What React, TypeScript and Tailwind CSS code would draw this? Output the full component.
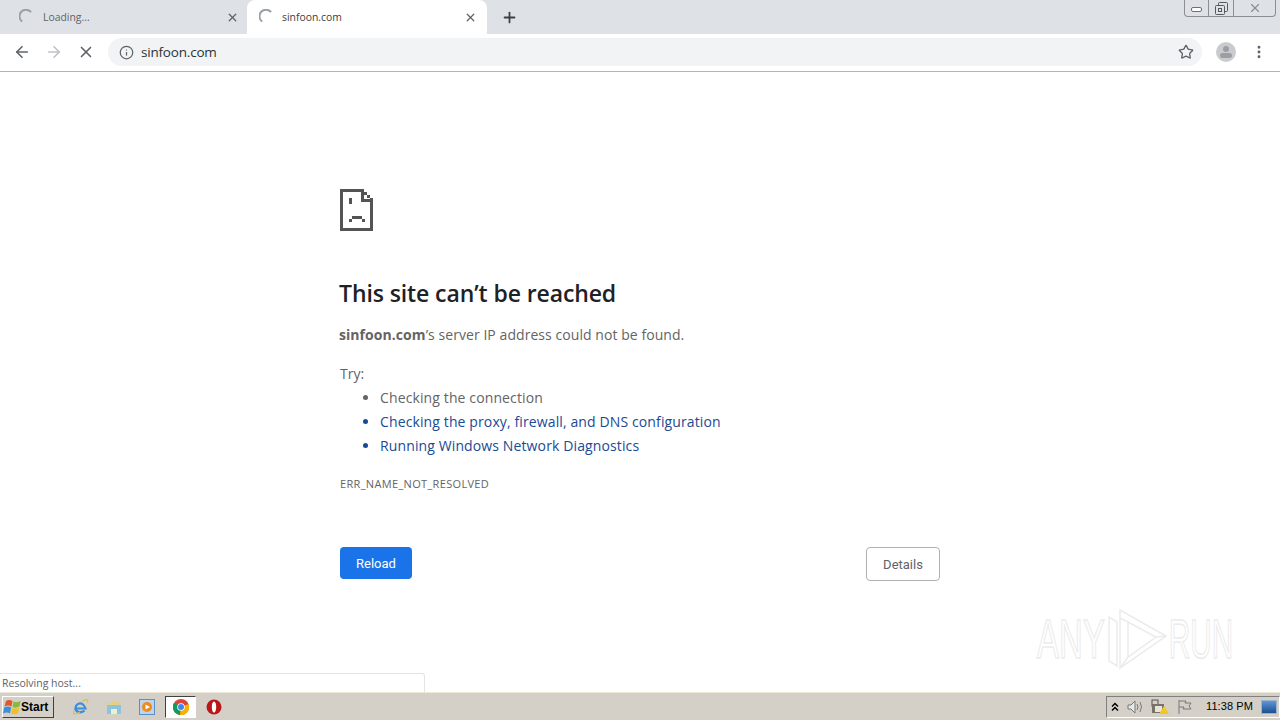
import React from 'react';
import { ArrowLeft, ArrowRight, Info, MoreVertical, Plus, Star, X } from 'lucide-react';

function Spinner() {
  return (
    <svg width="16" height="16" viewBox="0 0 16 16" fill="none" className="shrink-0">
      <path d="M2.5 12 A6.5 6.5 0 0 1 11.5 2.5" stroke="#9aa0a6" strokeWidth="2" strokeLinecap="round" />
    </svg>
  );
}

function SadPage() {
  return (
    <svg width="33" height="42" viewBox="0 0 33 42" fill="#545454" shapeRendering="crispEdges">
      <path d="M0 0H24V3H3V39H30V12H33V42H0Z" />
      <path d="M21 0H24V10H33V13H21Z" />
      <path d="M24 3H27V6H30V9H33V12H30V9H27V6H24Z" />
      <rect x="9" y="9" width="3" height="6" />
      <rect x="9" y="30" width="3" height="3" />
      <rect x="12" y="27" width="10" height="3" />
      <rect x="22" y="30" width="3" height="3" />
    </svg>
  );
}

function ChromeLogo() {
  return (
    <svg width="16" height="16" viewBox="0 0 16 16">
      <circle cx="8" cy="8" r="8" fill="#db4437" />
      <path d="M8 8 L1 4 A8 8 0 0 0 7 16 Z" fill="#0f9d58" />
      <path d="M8 8 L15.5 5 A8 8 0 0 1 7 16 Z" fill="#f4b400" />
      <circle cx="8" cy="8" r="3.8" fill="#fff" />
      <circle cx="8" cy="8" r="3" fill="#4285f4" />
    </svg>
  );
}

function StartFlag() {
  return (
    <svg width="18" height="18" viewBox="0 0 18 18" className="shrink-0">
      <path d="M3 3 Q6 1 9.5 3 L8.5 8.5 Q5 6.5 1.5 8.5 Z" fill="#e2562b" />
      <path d="M10.5 3.5 Q14 5 17.5 3 L16.5 8.5 Q13 10.5 9.5 9 Z" fill="#8ab83f" />
      <path d="M1.2 9.5 Q5 7.5 8.2 9.5 L7 15.5 Q4 13.5 0 15.5 Z" fill="#3f8fd8" />
      <path d="M9.3 10 Q13 11.5 16.3 9.5 L15 15.5 Q11.5 17 8 15.5 Z" fill="#f0c023" />
    </svg>
  );
}

function IeLogo() {
  return (
    <svg width="18" height="18" viewBox="0 0 18 18" fill="none">
      <path d="M14.5 10.5H4.5C4.5 6 9 4 12 6.5C13.5 7.8 14 9 14.5 10.5Z" stroke="#3b8fd9" strokeWidth="2.2" />
      <path d="M4.5 10.5C5 14.5 10.5 15.5 13.5 12.5" stroke="#3b8fd9" strokeWidth="2.4" />
      <path d="M3 13C1 17 5 16.5 9 14M11 3.5C14 1 18 0.5 16.5 5" stroke="#e0bd4a" strokeWidth="1.2" />
    </svg>
  );
}

export default function App() {
  return (
    <div className="flex h-[720px] w-[1280px] flex-col overflow-hidden bg-white font-['Open_Sans',sans-serif]">
      {/* tab strip */}
      <div className="flex h-[34px] shrink-0 bg-[#dee1e6]">
        <div className="flex h-[34px] w-[246px] items-center pl-[19px] pr-[7px]">
          <Spinner />
          <span className="ml-[8px] flex-1 pt-[1px] text-[10.4px] text-[#5f6368]">Loading...</span>
          <X size={13} strokeWidth={2.4} className="text-[#5f6368]" />
        </div>
        <div className="w-[1px]" />
        <div className="flex h-[34px] w-[240px] items-center rounded-t-lg bg-white pl-[12px] pr-[10px]">
          <Spinner />
          <span className="ml-[7px] flex-1 pt-[1px] text-[10.4px] text-[#3c4043]">sinfoon.com</span>
          <X size={13} strokeWidth={2.4} className="text-[#5f6368]" />
        </div>
        <div className="flex h-[34px] w-[44px] items-center justify-center">
          <Plus size={17} strokeWidth={2.5} className="text-[#3c4043]" />
        </div>
        <div className="ml-auto mr-[4px] flex h-[17px] w-[92px] rounded-b-[4px] border border-t-0 border-[#8b8f94]">
          <div className="flex w-[24px] items-center justify-center border-r border-[#8b8f94]">
            <div className="mt-[3px] h-[5px] w-[11px] rounded-[2px] border border-[#6b6f73] bg-white" />
          </div>
          <div className="flex w-[25px] items-center justify-center border-r border-[#8b8f94]">
            <svg width="13" height="13" viewBox="0 0 13 13" fill="none" stroke="#55595d">
              <rect x="3.5" y="0.5" width="9" height="9" rx="1" />
              <rect x="0.5" y="3.5" width="9" height="9" rx="1" fill="#dee1e6" />
              <rect x="3.5" y="6.5" width="3" height="3" />
            </svg>
          </div>
          <div className="flex flex-1 items-center justify-center">
            <X size={14} strokeWidth={2} className="text-[#8b8f94]" />
          </div>
        </div>
      </div>

      {/* toolbar */}
      <div className="flex h-[38px] shrink-0 items-center border-b border-[#b4b4b4] bg-white pb-[1px] pl-[13px]">
        <ArrowLeft size={18} strokeWidth={2.2} className="text-[#5f6368]" />
        <ArrowRight size={18} strokeWidth={2.2} className="ml-[14px] text-[#bdc1c6]" />
        <X size={18} strokeWidth={2.2} className="ml-[14px] text-[#5f6368]" />
        <div className="ml-[13px] flex h-[28px] w-[1094px] items-center rounded-full bg-[#f1f3f4] pl-[11px] pr-[8px]">
          <Info size={15} strokeWidth={2} className="text-[#5f6368]" />
          <span className="ml-[7px] flex-1 text-[13.5px] tracking-[-0.2px] text-[#303134]">sinfoon.com</span>
          <Star size={16} strokeWidth={2} className="text-[#5f6368]" />
        </div>
        <div className="ml-[14px] flex h-[20px] w-[20px] flex-col items-center justify-center gap-[1px] rounded-full bg-[#c9cbce]">
          <div className="h-[6px] w-[6px] rounded-full bg-[#9b9ea2]" />
          <div className="h-[5px] w-[12px] rounded-full bg-[#9b9ea2]" />
        </div>
        <MoreVertical size={16} strokeWidth={2.4} className="ml-[15px] text-[#5f6368]" />
      </div>

      {/* page */}
      <div className="relative flex-1 overflow-hidden">
        <div className="ml-[340px] flex w-[600px] flex-col pt-[117px]">
          <SadPage />
          <h1 className="mt-[46px] ml-[-1px] text-[23px] leading-[32px] font-semibold tracking-[-0.1px] text-[#202124]">This site can’t be reached</h1>
          <p className="mt-[14px] ml-[-1px] text-[14px] leading-[24px] tracking-[0.06px] text-[#646464]">
            <b className="font-bold">sinfoon.com</b>’s server IP address could not be found.
          </p>
          <p className="mt-[15px] text-[14px] leading-[24px] text-[#646464]">Try:</p>
          <ul className="list-disc pl-[40px] text-[14px] leading-[24px] tracking-[0.12px] text-[#646464]">
            <li>Checking the connection</li>
            <li className="text-[#1a4a94]">Checking the proxy, firewall, and DNS configuration</li>
            <li className="text-[#1a4a94]">Running Windows Network Diagnostics</li>
          </ul>
          <p className="mt-[18px] text-[11px] leading-[16px] tracking-[0.33px] text-[#646464]">ERR_NAME_NOT_RESOLVED</p>
          <div className="mt-[55px] flex items-start justify-between">
            <button className="h-[32px] w-[72px] rounded-[4px] bg-[#1a73e8] pt-[1px] font-['Roboto',sans-serif] text-[13px] text-white">Reload</button>
            <button className="h-[34px] w-[74px] rounded-[4px] border border-[#b0b0b0] bg-white pt-[1px] font-['Roboto',sans-serif] text-[13px] text-[#5f6368]">Details</button>
          </div>
        </div>

        {/* watermark */}
        <div className="absolute bottom-[22px] left-[1038px] flex items-center font-['Liberation_Sans',sans-serif] text-[55px] leading-none text-white [-webkit-text-stroke:1.5px_#ebebeb]">
          <span className="flex w-[66px] scale-x-[0.6] justify-center">ANY</span>
          <svg width="62" height="62" viewBox="0 0 62 62" fill="none" stroke="#ebebeb" strokeWidth="1.5" className="ml-[2px]">
            <path d="M3 9V53L11 58V14Z" />
            <path d="M14 2L60 28L14 60Z" />
            <path d="M22 14L50 29L22 49Z" />
            <path d="M14 10L22 14M14 60L22 49M60 28L50 29" />
          </svg>
          <span className="ml-[2px] flex w-[62px] scale-x-[0.54] justify-center">RUN</span>
        </div>

        {/* status bubble */}
        <div className="absolute bottom-0 left-0 h-[19px] w-[425px] rounded-tr-[3px] border-t border-r border-[#e4e4e4] bg-white pl-[2px] text-[10.5px] leading-[18px] text-[#5f6368]">Resolving host...</div>
      </div>

      {/* taskbar */}
      <div className="flex h-[28px] shrink-0 items-center border-t border-[#ece9d8] bg-[#d4d0c8] pl-[2px] font-['Liberation_Sans',sans-serif]">
        <button className="flex h-[22px] w-[52px] items-center border border-t-white border-l-white border-r-[#404040] border-b-[#404040] text-[12px] font-bold text-black">
          <StartFlag />
          Start
        </button>
        <div className="ml-[9px] flex items-center">
          <div className="flex w-[34px] justify-center">
            <IeLogo />
          </div>
          <div className="flex w-[34px] justify-center">
            <svg width="16" height="16" viewBox="0 0 16 16">
              <path d="M1 4H6L7 2H14V6H1Z" fill="#e8cf7a" />
              <rect x="1" y="6" width="14" height="9" fill="#8cc4e0" />
              <rect x="5" y="10" width="6" height="5" fill="#e8f2d0" />
            </svg>
          </div>
          <div className="flex w-[32px] justify-center">
            <svg width="16" height="16" viewBox="0 0 16 16">
              <rect x="0.5" y="0.5" width="15" height="15" fill="#bcd4ec" stroke="#5c8fc4" />
              <circle cx="8" cy="8" r="5" fill="#ef8a1e" />
              <path d="M6.5 5.5 L11 8 L6.5 10.5Z" fill="#fff" />
            </svg>
          </div>
          <div className="ml-[2px] flex h-[22px] w-[31px] items-center justify-center border border-t-[#404040] border-l-[#404040] border-r-white border-b-white bg-white">
            <ChromeLogo />
          </div>
          <div className="ml-[10px] flex w-[16px] justify-center">
            <svg width="16" height="16" viewBox="0 0 16 16">
              <circle cx="8" cy="8" r="7.5" fill="#b81818" />
              <ellipse cx="8" cy="8" rx="2.2" ry="5.5" fill="#fff" />
            </svg>
          </div>
        </div>
        <div className="ml-auto flex h-[22px] w-[174px] items-center border border-t-[#808080] border-l-[#808080] border-r-white border-b-white pl-[4px] text-[11px] whitespace-nowrap text-black">
          <svg width="8" height="10" viewBox="0 0 8 10" fill="none" stroke="#000" strokeWidth="1.5" className="shrink-0">
            <path d="M1 4.5L4 1.5L7 4.5M1 8.5L4 5.5L7 8.5" />
          </svg>
          <svg width="18" height="14" viewBox="0 0 18 14" fill="none" stroke="#77797b" className="ml-[8px] shrink-0">
            <path d="M1 5H4L8 1V13L4 9H1Z" fill="#e8e8e8" />
            <path d="M10 4Q12 7 10 10M13 2Q16 7 13 12" />
          </svg>
          <svg width="18" height="16" viewBox="0 0 18 16" className="ml-[6px] shrink-0">
            <rect x="1" y="1" width="6" height="6" fill="none" stroke="#55534d" />
            <rect x="1" y="5" width="12" height="9" fill="#77736a" />
            <rect x="4" y="7" width="7" height="6" fill="#e8e4da" />
            <path d="M13 7L18 15H8Z" fill="#f2c81e" />
          </svg>
          <svg width="16" height="16" viewBox="0 0 16 16" fill="none" stroke="#77797b" className="ml-[8px] shrink-0">
            <path d="M2 1V15M2 2H9L8 4H14L12 7L14 10H6L7 8H2" />
          </svg>
          <span className="ml-[13px] tracking-[0.1px]">11:38 PM</span>
          <div className="ml-[8px] h-[14px] w-[16px] shrink-0 border border-[#9db5cc] bg-linear-to-b from-[#5e97d8] to-[#1c4f8f]" />
        </div>
      </div>
    </div>
  );
}
